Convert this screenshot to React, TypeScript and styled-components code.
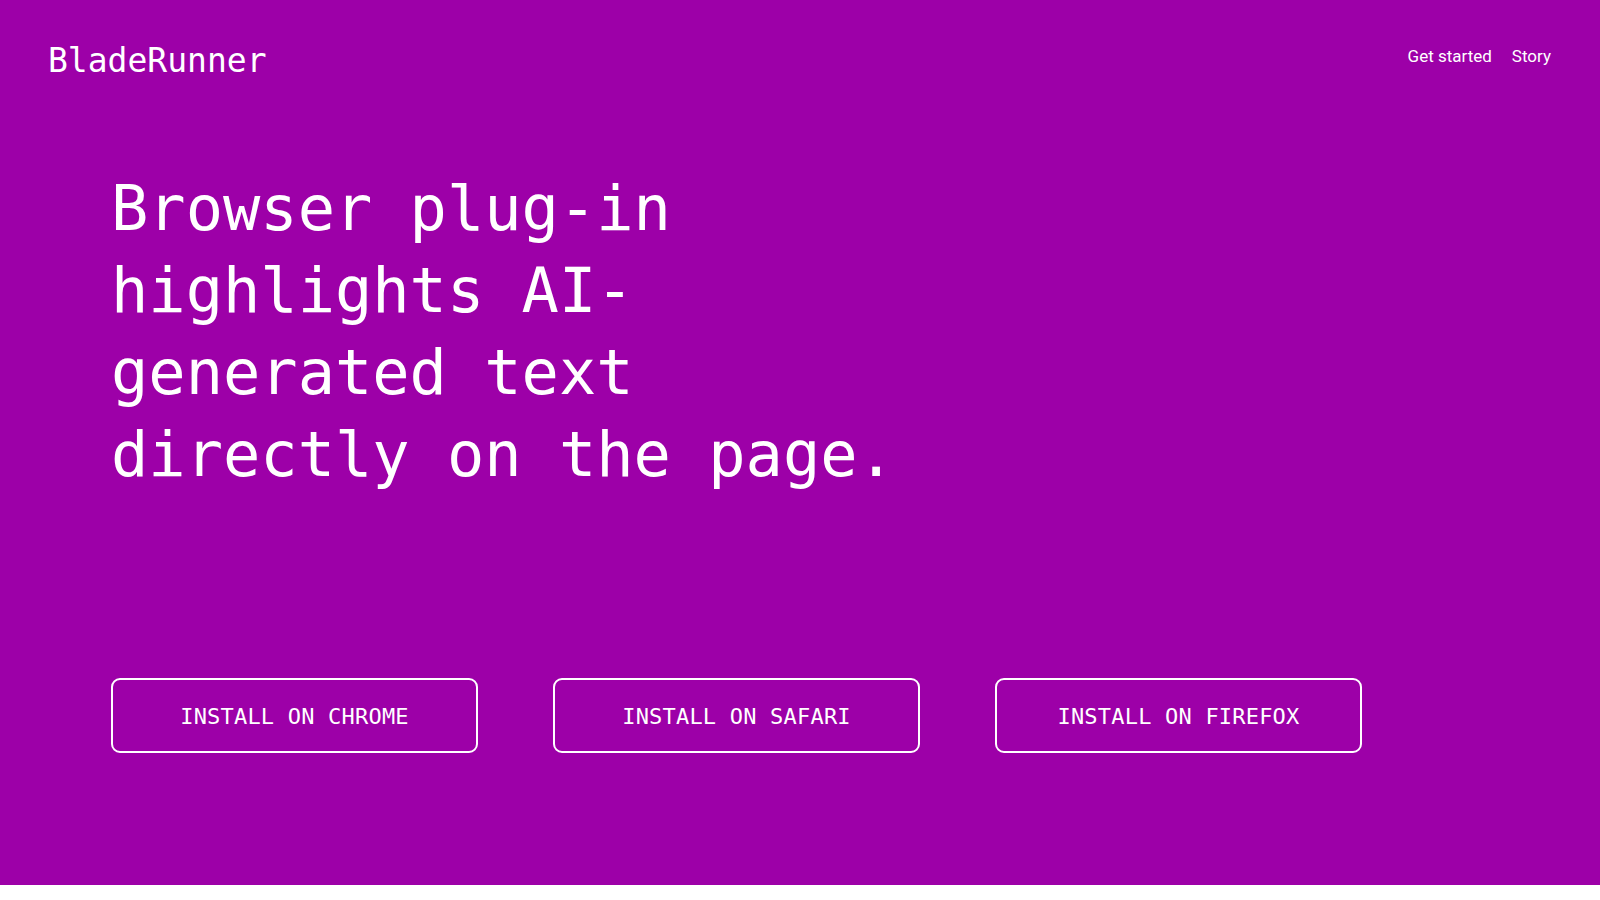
import React from "react";
import styled, { createGlobalStyle } from "styled-components";

const GlobalStyle = createGlobalStyle`
  html, body {
    margin: 0;
    padding: 0;
    background: #ffffff;
  }
  * { box-sizing: border-box; }
`;

const Hero = styled.section`
  background: #9d00a8;
  color: #ffffff;
  min-height: 885px;
  display: flex;
  flex-direction: column;
`;

const Header = styled.header`
  display: flex;
  justify-content: space-between;
  align-items: flex-start;
  padding: 41px 48px 0 48px;
`;

const Logo = styled.a`
  font-family: "DejaVu Sans Mono", "Liberation Mono", monospace;
  font-size: 33px;
  line-height: 40px;
  color: #ffffff;
  text-decoration: none;
`;

const Nav = styled.nav`
  display: flex;
  gap: 20px;
  padding-top: 3px;
  padding-right: 1px;
`;

const NavLink = styled.a`
  font-family: Roboto, "Noto Sans", sans-serif;
  font-size: 17px;
  line-height: 24px;
  color: #ffffff;
  text-decoration: none;
`;

const Main = styled.main`
  padding: 87px 112px 0 111px;
  display: flex;
  flex-direction: column;
`;

const Headline = styled.h1`
  margin: 0;
  max-width: 800px;
  font-family: "DejaVu Sans Mono", "Liberation Mono", monospace;
  font-weight: 400;
  font-size: 62px;
  line-height: 82px;
  color: #ffffff;
`;

const Buttons = styled.div`
  display: flex;
  gap: 75px;
  margin-top: 182px;
`;

const InstallButton = styled.a`
  width: 367px;
  height: 75px;
  display: flex;
  align-items: center;
  justify-content: center;
  border: 2px solid #ffffff;
  border-radius: 9px;
  font-family: "DejaVu Sans Mono", "Liberation Mono", monospace;
  font-size: 22px;
  letter-spacing: 0.2px;
  padding-top: 2px;
  color: #ffffff;
  text-decoration: none;
  text-transform: uppercase;
`;

export default function App() {
  return (
    <>
      <GlobalStyle />
      <Hero>
        <Header>
          <Logo href="#">BladeRunner</Logo>
          <Nav>
            <NavLink href="#">Get started</NavLink>
            <NavLink href="#">Story</NavLink>
          </Nav>
        </Header>
        <Main>
          <Headline>
            Browser plug-in highlights AI-generated text directly on the page.
          </Headline>
          <Buttons>
            <InstallButton href="#">Install on Chrome</InstallButton>
            <InstallButton href="#">Install on Safari</InstallButton>
            <InstallButton href="#">Install on Firefox</InstallButton>
          </Buttons>
        </Main>
      </Hero>
    </>
  );
}
